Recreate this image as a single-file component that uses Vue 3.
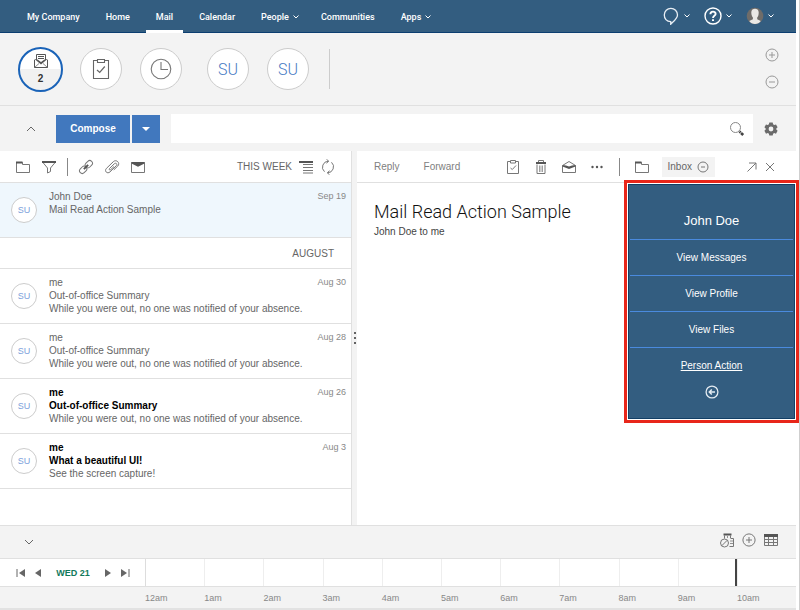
<script setup>
import { ref } from 'vue'

const navItems = [
  { label: 'My Company' },
  { label: 'Home' },
  { label: 'Mail', active: true },
  { label: 'Calendar' },
  { label: 'People', menu: true },
  { label: 'Communities' },
  { label: 'Apps', menu: true },
]

const groups = [
  {
    title: '',
    mails: [{ id: 1, from: 'John Doe', subject: 'Mail Read Action Sample', preview: '', date: 'Sep 19', selected: true }],
  },
  {
    title: 'AUGUST',
    mails: [
      { id: 2, from: 'me', subject: 'Out-of-office Summary', preview: 'While you were out, no one was notified of your absence.', date: 'Aug 30' },
      { id: 3, from: 'me', subject: 'Out-of-office Summary', preview: 'While you were out, no one was notified of your absence.', date: 'Aug 28' },
      { id: 4, from: 'me', subject: 'Out-of-office Summary', preview: 'While you were out, no one was notified of your absence.', date: 'Aug 26', unread: true },
      { id: 5, from: 'me', subject: 'What a beautiful UI!', preview: 'See the screen capture!', date: 'Aug 3', unread: true },
    ],
  },
]

const personLinks = ['View Messages', 'View Profile', 'View Files']
const hours = ['12am', '1am', '2am', '3am', '4am', '5am', '6am', '7am', '8am', '9am', '10am']
const nowHour = 9.97
const query = ref('')
</script>

<template>
  <div class="screen">
    <div class="app">
      <header class="topbar">
        <nav class="nav">
          <a v-for="n in navItems" :key="n.label" href="#" class="nav-item" :class="{ active: n.active }">
            {{ n.label }}
            <svg v-if="n.menu" class="chev" viewBox="0 0 6 4"><path d="M.5 .5 3 3 5.500 .5" /></svg>
          </a>
        </nav>
        <div class="top-tools">
          <button type="button" class="top-tool" aria-label="Chat">
            <svg class="i18" viewBox="0 0 18 18"><path d="M8.700 14.600C4.500 14.600 2.300 11.500 2.300 8A6.600 6.600 0 0 1 15.500 8C15.500 11.500 12 14 8.700 17.200Z" fill="none" stroke="#e8eef4" stroke-width="1.300" /></svg>
            <svg class="chev" viewBox="0 0 6 4"><path d="M.5 .5 3 3 5.500 .5" /></svg>
          </button>
          <button type="button" class="top-tool" aria-label="Help">
            <svg class="i18" viewBox="0 0 18 18" fill="none" stroke="#fff"><circle cx="9" cy="9" r="8" stroke-width="1.400" /><path d="M6.400 7.200C6.400 3.700 11.700 3.900 11.600 7 11.500 8.800 9 8.700 9 10.900" stroke-width="1.900" /><path d="M9 12.200V14" stroke-width="2" /></svg>
            <svg class="chev" viewBox="0 0 6 4"><path d="M.5 .5 3 3 5.500 .5" /></svg>
          </button>
          <button type="button" class="top-tool" aria-label="Account">
            <svg class="i18" viewBox="0 0 18 18"><circle cx="9" cy="9" r="8.300" fill="#6f6c69" /><path d="M5.300 5.200C5.300 .7 12.700 .7 12.700 5.200 12.700 8.200 12 9.600 11.200 10.600V12.300L14.800 14C12.500 18 5.500 18 3.200 14L6.900 12.300V10.600C6.100 9.600 5.300 8 5.300 5.200Z" fill="#e9e8e6" /></svg>
            <svg class="chev" viewBox="0 0 6 4"><path d="M.5 .5 3 3 5.500 .5" /></svg>
          </button>
        </div>
      </header>

      <section class="focus">
        <button type="button" class="bubble current" aria-label="2 messages">
          <svg class="i16" viewBox="0 0 16 16" fill="none" stroke="#555"><path d="M3.500 7V1.500H12.500V7M5 3.500H11M5 5.500H11M2 6.500 1.500 7V14.500H14.500V7L14 6.500" /><path d="M1.500 14.500 6 10.500M14.500 14.500 10 10.500" stroke-width=".7" /><path d="M1.500 6 8 11.500 14.500 6 11.500 6.500 8 9 4.500 6.500Z" fill="#555" stroke="none" /></svg>
          <span class="count">2</span>
        </button>
        <button type="button" class="bubble" aria-label="To do">
          <svg class="i22" viewBox="0 0 22 22" fill="none" stroke="#666"><path d="M7 2.500H3.500V20.500H18.500V2.500H15M7.500 4.500V1.500H14.500V4.500Z" stroke-width="1.100" /><path d="M7 12 9.700 14.500 14.800 8.500" stroke-width="1.200" /></svg>
        </button>
        <button type="button" class="bubble" aria-label="Follow up">
          <svg class="i22" viewBox="0 0 22 22" fill="none" stroke="#777" stroke-width="1.100"><circle cx="11" cy="11" r="9.800" /><path d="M11 4V11.500H18" /></svg>
        </button>
        <button type="button" class="bubble person">SU</button>
        <button type="button" class="bubble">SU</button>
        <span class="focus-rule"></span>
        <div class="focus-tools">
          <button type="button" aria-label="Add"><svg class="i14" viewBox="0 0 14 14"><circle cx="7" cy="7" r="6" /><path d="M4 7H10M7 4V10" /></svg></button>
          <button type="button" aria-label="Remove"><svg class="i14" viewBox="0 0 14 14"><circle cx="7" cy="7" r="6" /><path d="M4 7H10" /></svg></button>
        </div>
      </section>

      <section class="actions">
        <button type="button" class="collapse" aria-label="Collapse"><svg viewBox="0 0 10 6"><path d="M1 5 5 1 9 5" /></svg></button>
        <button type="button" class="compose">Compose</button>
        <button type="button" class="compose-more" aria-label="Compose options"><svg viewBox="0 0 8 4"><path d="M0 0H8L4 4Z" fill="#fff" /></svg></button>
        <label class="search">
          <input v-model="query" type="search" aria-label="Search mail" />
          <svg class="i16" viewBox="0 0 16 16" fill="none"><circle cx="6.500" cy="6.500" r="5" stroke="#888" /><path d="M10.500 10.500 14.200 14" stroke="#444" stroke-width="2.600" stroke-dasharray="1.500 .6 3" /></svg>
        </label>
        <button type="button" class="settings" aria-label="Settings">
          <svg class="i14" viewBox="0 0 14 14"><path fill-rule="evenodd" fill="#6b6b6b" d="M5.300 .5H8.700L9.100 2.300 10.200 2.900 12 2.400 13.600 5.300 12.300 6.500V7.600L13.600 8.800 12 11.700 10.200 11.100 9.100 11.800 8.700 13.500H5.300L4.900 11.800 3.800 11.100 2 11.700.4 8.800 1.700 7.600V6.500L.4 5.300 2 2.400 3.800 2.900 4.900 2.300ZM7 4.600A2.400 2.400 0 1 0 7 9.400 2.400 2.400 0 1 0 7 4.600Z" /></svg>
        </button>
      </section>

      <main class="panes">
        <section class="list">
          <div class="toolbar list-tools">
            <button type="button" aria-label="Folders"><svg class="i16" viewBox="0 0 16 16"><path d="M1.500 3.500V13.500H14.500V5.500H7.500V3.500Z" /><path d="M1 3.500H7.500" class="thick" /></svg></button>
            <button type="button" aria-label="Filter"><svg class="i16" viewBox="0 0 16 16"><path d="M1.500 3 6.500 9V14L9.500 12.500V9L14.500 3" /><path d="M1 3H15" class="thick" /></svg></button>
            <span class="rule"></span>
            <button type="button" aria-label="Links"><svg class="i16" viewBox="0 0 16 16"><g transform="rotate(-45 8 8)"><rect x="0" y="5.300" width="8" height="5.400" rx="2.700" /><rect x="8" y="5.300" width="8" height="5.400" rx="2.700" /><path d="M5 8H11" class="thick" /></g></svg></button>
            <button type="button" aria-label="Attachments"><svg class="i16" viewBox="0 0 16 16"><path d="M5.500 9.500 10.300 4.800C11.900 3.300 13.800 5.200 12.300 6.700L6 12.900C3.200 15.400-.1 12 2.500 9.300L9.300 2.700C12.300-.2 16.600 4 13.800 7L9.800 10.900M5.500 9.500C4.700 10.500 5.700 11.500 6.700 10.700L10 7.500" /></svg></button>
            <button type="button" aria-label="Unread"><svg class="i16" viewBox="0 0 16 16"><path d="M1.500 3.500H14.500V13.500H1.500Z" /><path d="M1.500 3H14.500V4.500L8 7.800 1.500 4.500Z" class="solid" /></svg></button>
            <span class="period">THIS WEEK</span>
            <span class="sort-pair">
              <button type="button" aria-label="Sort"><svg class="i16" viewBox="0 0 16 16"><path d="M1 3H15" class="thick" /><path d="M5 5.500H15M5 8.500H15M5 11.500H15M5 14H15" /></svg></button>
              <button type="button" aria-label="Refresh"><svg class="i16" viewBox="0 0 16 16"><path d="M4.500 12.700A6 6 0 0 1 8.500 2.200M11.500 3.300A6 6 0 0 1 7.500 13.800M6.500 .3 8.700 2.200 6.500 4.200M9.500 11.800 7.300 13.800 9.500 15.700" /></svg></button>
            </span>
          </div>
          <template v-for="g in groups" :key="g.title">
            <h2 v-if="g.title" class="month">{{ g.title }}</h2>
            <article v-for="m in g.mails" :key="m.id" class="mail" :class="{ selected: m.selected, unread: m.unread }">
              <span class="avatar">SU</span>
              <div class="mail-text">
                <div class="from">{{ m.from }}</div>
                <div class="subject">{{ m.subject }}</div>
                <div class="preview">{{ m.preview }}</div>
              </div>
              <time class="date">{{ m.date }}</time>
            </article>
          </template>
        </section>

        <div class="splitter"><i></i><i></i><i></i></div>

        <section class="reader">
          <div class="toolbar reader-tools">
            <button type="button" class="word">Reply</button>
            <button type="button" class="word">Forward</button>
            <span class="fill"></span>
            <button type="button" aria-label="Mark to do"><svg class="i16" viewBox="0 0 16 16"><path d="M5.500 2.500H2.500V14.500H13.500V2.500H10.500M5.500 1.500H10.500V4H5.500Z" /><path d="M5.500 9 7.300 10.500 11 6.500" /></svg></button>
            <button type="button" aria-label="Delete"><svg class="i16" viewBox="0 0 16 16"><path d="M5.500 3V1.500H10.500V3M4 5.500V14.500H12V5.500" /><path d="M6.500 6.500V13M8 6.500V13M9.500 6.500V13" stroke-width=".7" /><path d="M3 4H13" class="thick" /></svg></button>
            <button type="button" aria-label="Mark unread"><svg class="i16" viewBox="0 0 16 16"><path d="M1.500 6.500V13.500H14.500V6.500L8 2.500Z" /><path d="M1.500 6 5 6.500 8 7.500 11 6.500 14.500 6V7.500L8 10 1.500 7.500Z" class="solid" /></svg></button>
            <button type="button" aria-label="More"><svg class="i16" viewBox="0 0 16 16"><g class="solid"><circle cx="3.500" cy="8" r="1.200" /><circle cx="8" cy="8" r="1.200" /><circle cx="12.500" cy="8" r="1.200" /></g></svg></button>
            <span class="rule"></span>
            <button type="button" aria-label="Move to folder"><svg class="i16" viewBox="0 0 16 16"><path d="M1.500 3.500V13.500H14.500V5.500H7.500V3.500Z" /><path d="M1 3.500H7.500" class="thick" /></svg></button>
            <button type="button" class="chip">Inbox <svg class="i12" viewBox="0 0 12 12"><circle cx="6" cy="6" r="5" /><path d="M4 6H8" /></svg></button>
            <span class="pair">
              <button type="button" aria-label="Open in window"><svg class="i16" viewBox="0 0 16 16"><path d="M3.500 12.500 12 4M5 4H12V10.500" /></svg></button>
              <button type="button" aria-label="Close"><svg class="i16" viewBox="0 0 16 16"><path d="M4 4 12 12M12 4 4 12" /></svg></button>
            </span>
          </div>
          <div class="message">
            <h1>Mail Read Action Sample</h1>
            <p>John Doe to me</p>
          </div>
        </section>

        <aside class="card">
          <div class="card-body">
            <h2>John Doe</h2>
            <a v-for="p in personLinks" :key="p" href="#">{{ p }}</a>
            <a href="#" class="person-action">Person Action</a>
            <button type="button" aria-label="Back"><svg class="i14" viewBox="0 0 14 14" fill="none" stroke="#e4ebf1"><circle cx="7" cy="7" r="5.900" stroke-width="1.300" /><path d="M4.500 7H10M6.800 4.500 4.300 7 6.800 9.500" stroke-width="1.500" /></svg></button>
          </div>
        </aside>
      </main>

      <section class="calendar">
        <div class="cal-bar">
          <button type="button" class="collapse" aria-label="Hide calendar"><svg viewBox="0 0 10 6"><path d="M1 1 5 5 9 1" /></svg></button>
          <div class="cal-tools">
            <button type="button" aria-label="Availability"><svg class="i16" viewBox="0 0 16 16"><path d="M5.500 6.500V3.500M11.500 6.500V3.500M10.500 14.500H14.500V6.500H12" /><path d="M4.500 2.500H12.500" class="thick" /><path d="M11 9H14.500M11 11.500H14.500M8.500 4V6" stroke-width=".8" /><circle cx="5.500" cy="11" r="4" /><path d="M2.700 13.800 8.300 8.200" /></svg></button>
            <button type="button" aria-label="New event"><svg class="i14" viewBox="0 0 14 14"><circle cx="7" cy="7" r="6.100" /><path d="M4 7H10M7 4V10" /></svg></button>
            <button type="button" aria-label="Open calendar"><svg class="i16" viewBox="0 0 16 16"><path d="M1.500 3V13.500H14.500V3M1.500 7.500H14.500M1.500 10.500H14.500M5.500 4V13.500M10.500 4V13.500" /><path d="M1 2H15V5H1Z" class="solid" /></svg></button>
          </div>
        </div>
        <div class="timeline">
          <div class="transport">
            <button type="button" aria-label="Previous event"><svg viewBox="0 0 10 8"><path d="M1 0V8" stroke="#666" /><path d="M9 0V8L3 4Z" /></svg></button>
            <button type="button" aria-label="Previous day"><svg class="small" viewBox="0 0 6 8"><path d="M6 0V8L0 4Z" /></svg></button>
            <span class="day">WED 21</span>
            <button type="button" aria-label="Next day"><svg class="small" viewBox="0 0 6 8"><path d="M0 0V8L6 4Z" /></svg></button>
            <button type="button" aria-label="Next event"><svg viewBox="0 0 10 8"><path d="M9 0V8" stroke="#666" /><path d="M1 0V8L7 4Z" /></svg></button>
          </div>
          <div class="slots">
            <span v-for="h in hours" :key="h" class="slot"></span>
            <span class="now" :style="{ left: (nowHour / hours.length) * 100 + '%' }"></span>
          </div>
        </div>
        <div class="hours">
          <span v-for="h in hours" :key="h">{{ h }}</span>
        </div>
      </section>
    </div>
  </div>
</template>

<style>
body {
  margin: 0;
}
</style>

<style scoped>
* {
  box-sizing: border-box;
}
.screen {
  min-height: 100vh;
  display: flex;
  padding-right: 3px;
  border-right: 1px solid #cfcfcf;
  background: #fff;
  font-family: "Liberation Sans", Arial, sans-serif;
  font-size: 10px;
  color: #666;
}
.app {
  flex: 1;
  min-width: 0;
  display: flex;
  flex-direction: column;
  border-bottom: 2px solid #e2e2e2;
}
button {
  padding: 0;
  border: 0;
  background: none;
  font: inherit;
  color: inherit;
  display: flex;
  align-items: center;
  justify-content: center;
}
a {
  color: inherit;
  text-decoration: none;
}
h1,
h2,
p {
  margin: 0;
  font-weight: 400;
}
svg {
  display: block;
  flex: none;
}
.i12 { width: 12px; height: 12px; }
.i14 { width: 14px; height: 14px; }
.i16 { width: 16px; height: 16px; }
.i18 { width: 18px; height: 18px; }
.i22 { width: 22px; height: 22px; }

.topbar {
  height: 33px;
  flex: none;
  display: flex;
  justify-content: space-between;
  background: #335d80;
  border-bottom: 1px solid #0b3e70;
  color: #fff;
}
.nav {
  display: flex;
  gap: 6px;
  padding-left: 17px;
  font-family: Roboto, "Liberation Sans", sans-serif;
  font-weight: 500;
  font-size: 9px;
}
.nav-item {
  height: 33px;
  display: flex;
  align-items: center;
  padding: 4px 10px 0;
  border-bottom: 3px solid transparent;
}
.nav-item.active {
  border-bottom-color: #fff;
}
.chev {
  width: 6px;
  height: 4px;
  margin-left: 4px;
  fill: none;
  stroke: #fff;
}
.nav-item .chev {
  margin-right: -4px;
}
.top-tools {
  display: flex;
  gap: 14px;
  padding-right: 22px;
}

.focus {
  height: 73px;
  flex: none;
  display: flex;
  align-items: center;
  gap: 18px;
  padding: 0 17px 0 18px;
  background: #f3f3f3;
  border-bottom: 1px solid #e0e0e0;
}
.bubble {
  width: 42px;
  height: 42px;
  flex: none;
  border: 1px solid #ccc;
  border-radius: 50%;
  background: #fff;
  color: #4a7cc4;
  font-family: Roboto, sans-serif;
  font-weight: 300;
  font-size: 16px;
}
.bubble.current {
  width: 45px;
  height: 45px;
  margin-right: -1px;
  flex-direction: column;
  gap: 4px;
  border: 2px solid #1a63b8;
  background: linear-gradient(#fff 50%, #f1f1f1 50%);
}
.bubble.person {
  margin-left: 7px;
}
.count {
  color: #333;
  font-family: "Liberation Sans", Arial, sans-serif;
  font-weight: 700;
  font-size: 10px;
  line-height: 12px;
}
.focus-rule {
  width: 1px;
  height: 40px;
  margin-left: 2px;
  background: #ccc;
}
.focus-tools {
  margin-left: auto;
  padding-bottom: 2px;
  display: grid;
  gap: 13px;
}
.focus-tools svg {
  fill: none;
  stroke: #999;
}

.actions {
  height: 45px;
  flex: none;
  display: flex;
  align-items: center;
  background: #f3f3f3;
}
.collapse {
  width: 18px;
  height: 14px;
}
.collapse svg {
  width: 10px;
  height: 6px;
  fill: none;
  stroke: #666;
}
.actions .collapse {
  margin: 0 16px 0 22px;
}
.compose,
.compose-more {
  height: 28px;
  background: #4178be;
  color: #fff;
  font-weight: 700;
}
.compose {
  width: 74px;
  margin-right: 2px;
}
.compose-more {
  width: 28px;
  margin-right: 11px;
}
.compose-more svg {
  width: 8px;
  height: 4px;
}
.search {
  flex: 1;
  height: 29px;
  display: flex;
  align-items: center;
  padding-right: 8px;
  background: #fff;
}
.search input {
  flex: 1;
  min-width: 0;
  height: 28px;
  padding: 0 10px;
  border: 0;
  outline: 0;
  background: transparent;
  font: inherit;
}
.settings {
  margin: 0 18px 0 11px;
}

.panes {
  flex: 1;
  display: flex;
  position: relative;
}
.list {
  flex: 4;
  min-width: 0;
  max-width: 351px;
}
.reader {
  flex: 5;
  min-width: 0;
}
.toolbar {
  height: 32px;
  display: flex;
  align-items: center;
  gap: 12px;
  border-bottom: 1px solid #e0e0e0;
}
.toolbar svg,
.cal-tools svg {
  fill: none;
  stroke: #777;
}
.toolbar .thick,
.cal-tools .thick {
  stroke: #555;
  stroke-width: 2;
}
.toolbar .solid,
.cal-tools .solid {
  fill: #555;
  stroke: none;
}
.rule {
  width: 1px;
  height: 18px;
  background: #888;
}
.list-tools {
  gap: 10px;
  padding: 0 15px;
}
.period {
  margin-left: auto;
  margin-right: -4px;
}
.sort-pair {
  display: flex;
  gap: 6px;
}
.mail {
  height: 55px;
  display: flex;
  padding: 7px 5px 0 11px;
  border-bottom: 1px solid #e0e0e0;
  line-height: 13px;
}
.mail.selected {
  background: #eff7fd;
}
.avatar {
  width: 26px;
  height: 26px;
  flex: none;
  margin: 7px 12px 0 0;
  display: flex;
  align-items: center;
  justify-content: center;
  border: 1px solid #ccc;
  border-radius: 50%;
  background: #fff;
  color: #7c9fdb;
  font-size: 9px;
}
.mail-text {
  flex: 1;
  min-width: 0;
}
.unread .from,
.unread .subject {
  color: #000;
  font-weight: 700;
}
.date {
  color: #888;
  font-size: 9px;
}
.month {
  height: 31px;
  padding-right: 17px;
  border-bottom: 1px solid #e0e0e0;
  font-size: 10px;
  line-height: 31px;
  text-align: right;
}
.splitter {
  width: 6px;
  flex: none;
  display: flex;
  flex-direction: column;
  align-items: center;
  justify-content: center;
  gap: 3px;
  border-left: 1px solid #e0e0e0;
  background: #f3f3f3;
}
.splitter i {
  width: 2px;
  height: 2px;
  border-radius: 1px;
  background: #333;
}
.reader-tools {
  padding: 0 18px 0 17px;
}
.word {
  margin-right: 12px;
  color: #808080;
}
.fill {
  flex: 1;
}
.reader-tools .rule {
  margin: 0 2px;
}
.chip {
  height: 20px;
  gap: 5px;
  padding: 0 6px;
  background: #f3f3f3;
}
.pair {
  display: flex;
  gap: 2px;
  margin-left: 17px;
}
.message {
  padding: 17px;
  color: #444;
}
h1 {
  font-family: Roboto, "Liberation Sans", sans-serif;
  font-weight: 300;
  font-size: 18px;
  line-height: 24px;
  color: #111;
}
.message p {
  line-height: 15px;
}

.card {
  position: absolute;
  top: 29px;
  right: -3px;
  width: 175px;
  border: 3px solid #e8261a;
}
.card-body {
  margin: 1px;
  padding: 1px 1px 19px;
  border: 1px solid #123f66;
  background: #335d80;
  color: #fff;
  text-align: center;
}
.card h2,
.card a {
  display: block;
  border-bottom: 1px solid #4a8ade;
}
.card h2 {
  height: 54px;
  padding-top: 20px;
  font-size: 13px;
  line-height: 30px;
}
.card a {
  height: 36px;
  line-height: 35px;
}
.card .person-action {
  border: 0;
  text-decoration: underline;
}
.card button {
  margin: 1px auto 0;
}

.cal-bar {
  height: 34px;
  display: flex;
  align-items: center;
  justify-content: space-between;
  padding: 0 17px 0 20px;
  background: #f3f3f3;
  border-top: 1px solid #e0e0e0;
  border-bottom: 1px solid #e0e0e0;
}
.cal-tools {
  display: flex;
  align-items: center;
  gap: 7px;
  padding-bottom: 4px;
}
.timeline {
  height: 28px;
  display: flex;
  border-bottom: 1px solid #e0e0e0;
}
.transport {
  width: 145px;
  flex: none;
  display: flex;
  align-items: center;
  justify-content: space-between;
  padding: 0 15px 0 16px;
}
.transport svg {
  width: 10px;
  height: 8px;
  fill: #666;
}
.transport svg.small {
  width: 6px;
}
.day {
  margin: 0 7px;
  color: #11795b;
  font-size: 9px;
  font-weight: 700;
}
.slots {
  flex: 1;
  position: relative;
  display: flex;
}
.slot {
  flex: 1;
  border-left: 1px solid #eee;
}
.slot:first-child {
  border-left-color: #ddd;
}
.now {
  position: absolute;
  top: 0;
  width: 2px;
  height: 27px;
  background: #444;
}
.hours {
  height: 21px;
  display: flex;
  padding-left: 145px;
  background: #f3f3f3;
  color: #888;
  font-size: 9px;
  line-height: 23px;
}
.hours span {
  flex: 1;
}
</style>
